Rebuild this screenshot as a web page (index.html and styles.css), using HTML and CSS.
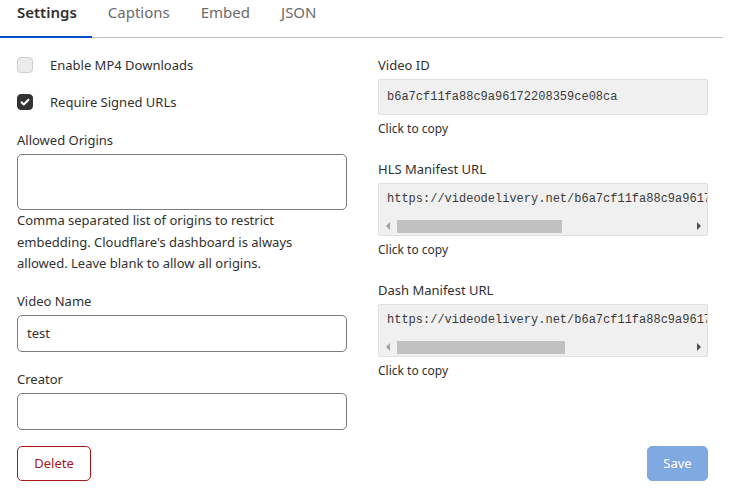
FILE: index.html
```html
<!DOCTYPE html>
<html lang="en">
<head>
<meta charset="utf-8">
<title>Video Settings</title>
<link rel="stylesheet" href="styles.css">
</head>
<body>
<nav class="tabs">
  <a class="tab active">Settings</a>
  <a class="tab">Captions</a>
  <a class="tab">Embed</a>
  <a class="tab">JSON</a>
</nav>
<form class="form">
  <div class="grid">
    <div class="col">
      <label class="check">
        <span class="box"></span>
        <span>Enable MP4 Downloads</span>
      </label>
      <label class="check second">
        <span class="box checked">
          <svg viewBox="0 0 16 16" width="16" height="16"><path d="M4 8.3l2.6 2.6L12 5.4" fill="none" stroke="#fff" stroke-width="2.2" stroke-linecap="round" stroke-linejoin="round"/></svg>
        </span>
        <span>Require Signed URLs</span>
      </label>
      <div class="label l-origins">Allowed Origins</div>
      <div class="field textarea"></div>
      <p class="help">Comma separated list of origins to restrict embedding. Cloudflare's dashboard is always allowed. Leave blank to allow all origins.</p>
      <div class="label l-name">Video Name</div>
      <div class="field input">test</div>
      <div class="label l-creator">Creator</div>
      <div class="field input"></div>
    </div>
    <div class="col">
      <div class="label">Video ID</div>
      <div class="code">b6a7cf11fa88c9a96172208359ce08ca</div>
      <div class="copy">Click to copy</div>
      <div class="label l-url">HLS Manifest URL</div>
      <div class="code scroll">
        <div class="url">https://videodelivery.net/b6a7cf11fa88c9a96172208359ce08ca/manifest/video.m3u8</div>
        <div class="bar">
          <span class="arrow left"></span>
          <span class="track"><span class="thumb" style="width:165px"></span></span>
          <span class="arrow right"></span>
        </div>
      </div>
      <div class="copy">Click to copy</div>
      <div class="label l-url">Dash Manifest URL</div>
      <div class="code scroll">
        <div class="url">https://videodelivery.net/b6a7cf11fa88c9a96172208359ce08ca/manifest/video.mpd</div>
        <div class="bar">
          <span class="arrow left"></span>
          <span class="track"><span class="thumb" style="width:168px"></span></span>
          <span class="arrow right"></span>
        </div>
      </div>
      <div class="copy">Click to copy</div>
    </div>
  </div>
  <div class="footer">
    <button type="button" class="btn delete">Delete</button>
    <button type="button" class="btn save">Save</button>
  </div>
</form>
</body>
</html>
```
FILE: styles.css
```css
* { box-sizing: border-box; }
body {
  margin: 0;
  background: #fff;
  color: #313131;
  font-family: "Noto Sans", "Open Sans", sans-serif;
  font-size: 13px;
  width: 733px;
  height: 498px;
  overflow: hidden;
}
.tabs {
  display: flex;
  width: 723px;
  height: 38px;
  border-bottom: 1px solid #bdbdbd;
}
.tab {
  display: block;
  padding: 0 15px 0 16px;
  line-height: 24px;
  font-size: 15px;
  color: #6b6b6b;
  border-bottom: 2px solid transparent;
  margin-bottom: -1px;
  height: 38px;
}
.tab.active {
  font-weight: 600;
  color: #313131;
  border-bottom-color: #0051c3;
  padding: 0 15px 0 17px;
}
.form {
  padding: 0 25px 0 17px;
}
.grid {
  display: grid;
  grid-template-columns: 330px 330px;
  column-gap: 31px;
  padding-top: 17px;
}
.col {
  display: flex;
  flex-direction: column;
}
.check {
  display: flex;
  align-items: center;
  height: 20px;
  gap: 17px;
  line-height: 20px;
}
.check.second { margin-top: 17px; }
.box {
  width: 16px;
  height: 16px;
  border-radius: 4px;
  background: #ececec;
  border: 1px solid #cfcfcf;
  display: flex;
  align-items: center;
  justify-content: center;
}
.box.checked {
  background: #333;
  border-color: #333;
}
.label {
  line-height: 20px;
  margin-bottom: 4px;
}
.l-origins { margin-top: 18px; }
.l-name { margin-top: 16px; }
.l-creator { margin-top: 17px; }
.field {
  border: 1px solid #7b7b7b;
  border-radius: 5px;
  background: #fff;
}
.textarea { height: 56px; }
.input {
  height: 37px;
  padding: 0 9px;
  line-height: 35px;
}
.help {
  margin: 0;
  line-height: 21.5px;
  width: 300px;
}
.code {
  background: #f0f0f0;
  border: 1px solid #e0e0e0;
  border-radius: 2px;
  font-family: "Liberation Mono", monospace;
  font-size: 12px;
  color: #3a3a3a;
  height: 36px;
  padding: 0 8px;
  line-height: 34px;
  overflow: hidden;
  white-space: nowrap;
}
.code.scroll {
  height: 53px;
  padding: 7px 0 0;
  line-height: 16px;
}
.url {
  padding: 0 8px;
  height: 26px;
  overflow: hidden;
}
.bar {
  display: flex;
  align-items: center;
  height: 18px;
}
.arrow {
  width: 17px;
  height: 18px;
  position: relative;
}
.arrow::after {
  content: "";
  position: absolute;
  top: 5px;
  border-top: 4px solid transparent;
  border-bottom: 4px solid transparent;
}
.arrow.left::after {
  left: 7px;
  border-right: 4px solid #a3a3a3;
}
.arrow.right::after {
  left: 7px;
  border-left: 4px solid #505050;
}
.track {
  flex: 1;
  height: 13px;
  margin-top: 1px;
}
.thumb {
  display: block;
  height: 13px;
  margin-left: 1px;
  background: #c1c1c1;
}
.copy {
  font-size: 12px;
  line-height: 18px;
  margin-top: 5px;
}
.l-url { margin-top: 21px; }
.footer {
  display: flex;
  justify-content: space-between;
  width: 691px;
  margin-top: 16px;
}
.btn {
  font-family: "Noto Sans", "Open Sans", sans-serif;
  font-size: 13px;
  height: 35px;
  border-radius: 5px;
  cursor: pointer;
}
.delete {
  width: 74px;
  background: #fff;
  border: 1px solid #a81818;
  color: #a81818;
}
.save {
  width: 61px;
  background: #80a8e1;
  border: 1px solid #80a8e1;
  color: #fff;
}
```
